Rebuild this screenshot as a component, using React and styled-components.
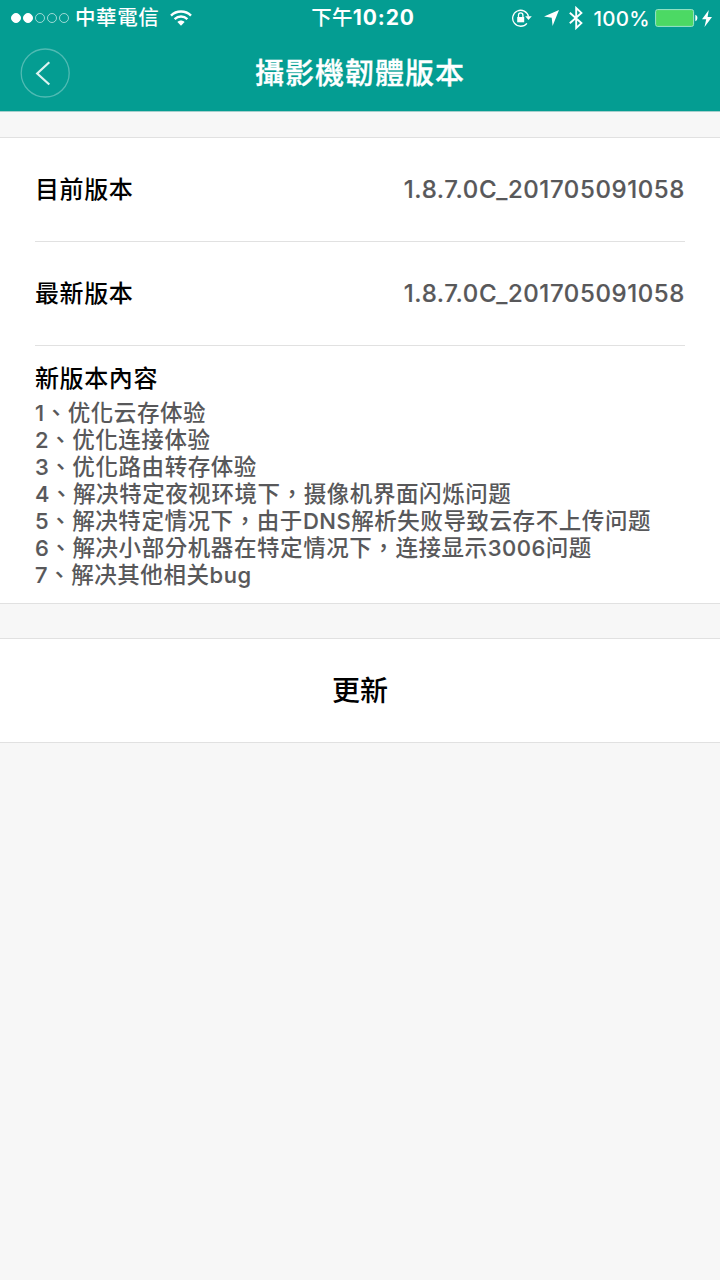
import React from 'react';
import styled, { createGlobalStyle } from 'styled-components';

const GlobalStyle = createGlobalStyle`
  * {
    box-sizing: border-box;
  }
  body {
    margin: 0;
    background-color: #f7f7f7;
    font-family: Inter, 'Noto Sans CJK TC', 'Noto Sans CJK SC', sans-serif;
    font-weight: 500;
    color: #000;
  }
`;

const Page = styled.div`
  width: 720px;
  height: 1280px;
  overflow: hidden;
  background-color: #f7f7f7;
`;

const Header = styled.header`
  height: 112px;
  background-color: #049d92;
  border-bottom: 1px solid #a5cfcc;
  color: #fff;
`;

const StatusBar = styled.div`
  height: 36px;
  display: grid;
  grid-template-columns: 1fr auto 1fr;
  grid-template-rows: 36px;
  align-items: center;
  padding: 0 8px 0 11px;
  font-size: 20.5px;
  line-height: 36px;
`;

const StatusGroup = styled.div`
  display: flex;
  align-items: center;
  height: 36px;
  justify-content: ${props => (props.$end ? 'flex-end' : 'flex-start')};
`;

const Dots = styled.div`
  display: flex;
  gap: 2px;
  margin: 0 6px 1px 0;
`;

const Dot = styled.span`
  width: 10px;
  height: 10px;
  border-radius: 50%;
  border: 1px solid ${props => (props.$on ? '#fff' : 'rgba(255, 255, 255, 0.6)')};
  background-color: ${props => (props.$on ? '#fff' : 'transparent')};
`;

const Carrier = styled.span`
  letter-spacing: 0.6px;
  margin: 0 11px 0 0;
`;

const Clock = styled.span`
  padding-left: 3px;
  letter-spacing: 0.3px;
  line-height: 36px;

  strong {
    font-weight: 700;
    font-size: 21px;
    letter-spacing: 0.9px;
    line-height: 1;
  }
`;

const Percent = styled.span`
  margin: 1px 5px 0 10px;
  letter-spacing: 0.3px;
`;

const NavBar = styled.div`
  height: 75px;
  display: grid;
  grid-template-columns: 50px 1fr 50px;
  align-items: center;
  padding: 0 20px;
`;

const BackButton = styled.button`
  width: 50px;
  height: 50px;
  margin-top: -1px;
  padding: 0;
  border: 0;
  background: none;
  display: block;
`;

const Title = styled.h1`
  margin: 1px 0 0;
  text-align: center;
  font-size: 29px;
  line-height: 40px;
  font-weight: 500;
  letter-spacing: 1px;
  -webkit-text-stroke: 0.3px currentColor;
`;

const Card = styled.section`
  margin-top: ${props => props.$gap}px;
  padding: 0 35px;
  background-color: #fff;
  border-top: 1px solid #e1e1e1;
  border-bottom: 1px solid #e1e1e1;
`;

const Row = styled.div`
  height: ${props => props.$height}px;
  display: flex;
  justify-content: space-between;
  align-items: center;
  border-bottom: 1px solid #e1e1e1;
`;

const Label = styled.span`
  font-size: 24px;
  line-height: 32px;
  letter-spacing: 0.6px;
`;

const Version = styled.span`
  font-size: 24px;
  line-height: 32px;
  letter-spacing: 0.6px;
  color: #58585a;
  -webkit-text-stroke: 0.15px currentColor;
`;

const Notes = styled.div`
  height: 257px;
  padding-top: 17px;
`;

const NoteList = styled.ol`
  margin: 4px 0 0;
  padding: 0;
  list-style: none;
  font-size: 22.5px;
  line-height: 27px;
  letter-spacing: 0.57px;
  color: #58585a;
`;

const Note = styled.li`
  height: 27px;
  white-space: nowrap;
`;

const Latin = styled.span`
  font-size: 22px;
  letter-spacing: 0.5px;
  -webkit-text-stroke: 0.15px currentColor;
`;

const UpdateButton = styled.button`
  display: block;
  width: 100%;
  height: 103px;
  padding: 0 0 3px;
  border: 0;
  background: none;
  font: inherit;
  font-size: 28px;
  color: #000;
`;

const WifiIcon = () => (
  <svg width="22" height="16" viewBox="0 0 22 16" fill="none" stroke="#fff" strokeWidth="2.4">
    <path d="M1 5.6C6.5.2 15.5.2 21 5.6" />
    <path d="M4.6 9.1c3.7-3.5 9.1-3.5 12.8 0" />
    <path d="M11 15.8 7.4 12.1c2-2 5.2-2 7.2 0z" fill="#fff" stroke="none" />
  </svg>
);

const LockIcon = () => (
  <svg width="20" height="18" viewBox="0 0 20 18" fill="none" stroke="#fff">
    <path d="M16.5 7.6A8 8 0 1 0 14.9 14.3" strokeWidth="1.3" />
    <path d="M13.2 7.2h6.6l-3.3 3.8z" fill="#fff" stroke="none" />
    <rect x="5.2" y="8" width="7" height="5.3" fill="#fff" stroke="none" />
    <path d="M6.5 8V6.1a2.2 2.2 0 0 1 4.400 0V8" strokeWidth="1.3" />
  </svg>
);

const LocationIcon = () => (
  <svg width="15" height="16" viewBox="0 0 15 16" fill="#fff">
    <path d="M15 0 8.600 16 7.700 7.800 0 6.600z" />
  </svg>
);

const BluetoothIcon = () => (
  <svg width="14" height="24" viewBox="0 0 14 24" fill="none" stroke="#fff" strokeWidth="1.9">
    <path d="M.8 6.800 12.400 17.100 7.200 22V2l5.200 4.900L.8 17.200" />
  </svg>
);

const BatteryIcon = () => (
  <svg width="43" height="18" viewBox="0 0 43 18">
    <rect x=".6" y=".6" width="38" height="16.8" rx="2" fill="#4cd964" stroke="#9be5cb" strokeWidth="1" />
    <path d="M40.3 5.8c2.8.5 2.8 5.9 0 6.4z" fill="#fff" />
  </svg>
);

const ChargeIcon = () => (
  <svg width="10" height="17" viewBox="0 0 10 17" fill="#fff">
    <path d="M6.8 0 0 9.3h4.2L2.5 17 10 7H5.6z" />
  </svg>
);

const BackIcon = () => (
  <svg width="50" height="50" viewBox="0 0 50 50" fill="none">
    <circle cx="25.2" cy="25" r="24" stroke="#fff" strokeOpacity=".3" strokeWidth="1.3" />
    <path d="M29.3 14.3 17.2 25.5l12.1 11" stroke="#dcf3f0" strokeWidth="2.2" />
  </svg>
);

const IconRow = styled.div`
  display: flex;
  align-items: center;
  height: 36px;

  svg {
    flex: none;
  }
`;

const IconGap = styled.span`
  width: ${props => props.$width}px;
`;

const StatusIcons = () => (
  <IconRow>
    <LockIcon />
    <IconGap $width={12} />
    <LocationIcon />
    <IconGap $width={10} />
    <BluetoothIcon />
    <Percent>100%</Percent>
    <BatteryIcon />
    <IconGap $width={4} />
    <ChargeIcon />
  </IconRow>
);

const versions = [
  { label: '目前版本', value: '1.8.7.0C_201705091058', height: 104 },
  { label: '最新版本', value: '1.8.7.0C_201705091058', height: 104 },
];

const notes = [
  '优化云存体验',
  '优化连接体验',
  '优化路由转存体验',
  '解决特定夜视环境下，摄像机界面闪烁问题',
  '解决特定情况下，由于DNS解析失败导致云存不上传问题',
  '解决小部分机器在特定情况下，连接显示3006问题',
  '解决其他相关bug',
];

// latin runs are set slightly heavier than the chinese around them
const renderNote = text => text.split(/([A-Za-z0-9]+)/).map((part, i) => (
  i % 2 ? <Latin key={i}>{part}</Latin> : part
));

const App = () => (
  <Page lang="zh-Hant">
    <GlobalStyle />
    <Header>
      <StatusBar>
        <StatusGroup>
          <Dots>
            {[true, true, false, false, false].map((on, i) => <Dot key={i} $on={on} />)}
          </Dots>
          <Carrier>中華電信</Carrier>
          <WifiIcon />
        </StatusGroup>
        <Clock>下午<strong>10:20</strong></Clock>
        <StatusGroup $end>
          <StatusIcons />
        </StatusGroup>
      </StatusBar>
      <NavBar>
        <BackButton aria-label="返回"><BackIcon /></BackButton>
        <Title>攝影機韌體版本</Title>
      </NavBar>
    </Header>
    <Card $gap={25}>
      {versions.map(({ label, value, height }) => (
        <Row key={label} $height={height}>
          <Label>{label}</Label>
          <Version>{value}</Version>
        </Row>
      ))}
      <Notes>
        <Label>新版本內容</Label>
        <NoteList>
          {notes.map((note, i) => <Note key={note}>{renderNote(`${i + 1}、${note}`)}</Note>)}
        </NoteList>
      </Notes>
    </Card>
    <Card $gap={34}>
      <UpdateButton>更新</UpdateButton>
    </Card>
  </Page>
);

export default App;
